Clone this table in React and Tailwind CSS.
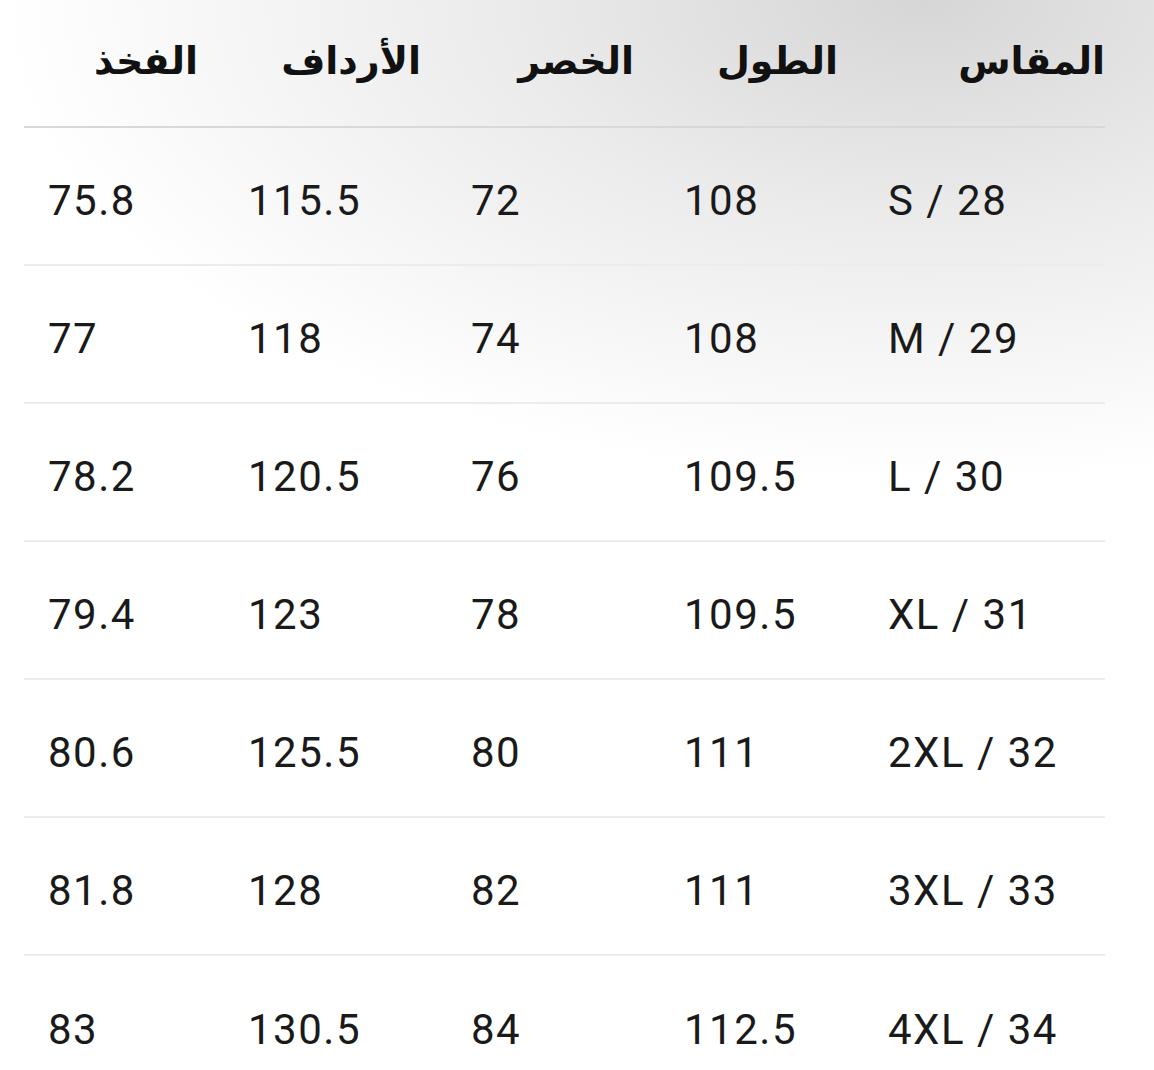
import React from "react";

const headers = ["الفخذ", "الأرداف", "الخصر", "الطول", "المقاس"];
const rows = [
  ["75.8", "115.5", "72", "108", "S / 28"],
  ["77", "118", "74", "108", "M / 29"],
  ["78.2", "120.5", "76", "109.5", "L / 30"],
  ["79.4", "123", "78", "109.5", "XL / 31"],
  ["80.6", "125.5", "80", "111", "2XL / 32"],
  ["81.8", "128", "82", "111", "3XL / 33"],
  ["83", "130.5", "84", "112.5", "4XL / 34"],
];

export default function App() {
  return (
    <div className="w-[1154px] h-[1070px] overflow-hidden bg-white bg-[radial-gradient(ellipse_80%_45%_at_80%_0%,#d6d6d6_0%,#ebebeb_45%,#ffffff_100%)]">
      <div className="ml-[24px] w-[1081px]">
        <div className="grid grid-cols-[200px_223px_213px_204px_241px] h-[128px] items-center border-b-2 border-[#d8d8d8]">
          {headers.map((h, i) => (
            <div
              key={i}
              dir="rtl"
              className={`text-right font-bold text-[38px] leading-none text-[#111] pb-[4px] font-['DejaVu_Sans',sans-serif] ${i === 4 ? "pl-0 pr-0" : "pr-[26px]"}`}
            >
              {h}
            </div>
          ))}
        </div>
        {rows.map((r, ri) => (
          <div
            key={ri}
            className={`grid grid-cols-[200px_223px_213px_204px_241px] h-[138px] items-center ${ri < rows.length - 1 ? "border-b-2 border-[#ececec]" : ""}`}
          >
            {r.map((c, ci) => (
              <div
                key={ci}
                className="pl-[24px] pt-[10px] text-[42px] tracking-[1.5px] leading-none text-[#1a1a1a] font-['Roboto',sans-serif]"
              >
                {c}
              </div>
            ))}
          </div>
        ))}
      </div>
    </div>
  );
}
